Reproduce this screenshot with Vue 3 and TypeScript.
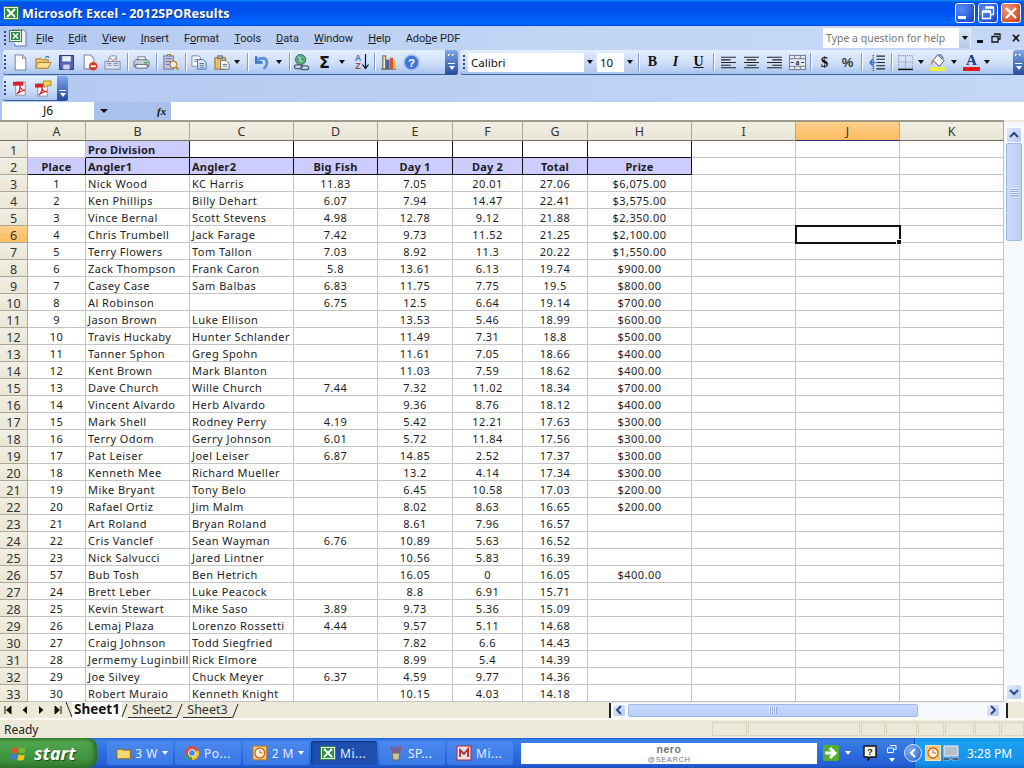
<script setup lang="ts">
const cols: string[] = ['A', 'B', 'C', 'D', 'E', 'F', 'G', 'H', 'I', 'J', 'K']
const data: string[][] = [
  ['1', 'Nick Wood', 'KC Harris', '11.83', '7.05', '20.01', '27.06', '$6,075.00'],
  ['2', 'Ken Phillips', 'Billy Dehart', '6.07', '7.94', '14.47', '22.41', '$3,575.00'],
  ['3', 'Vince Bernal', 'Scott Stevens', '4.98', '12.78', '9.12', '21.88', '$2,350.00'],
  ['4', 'Chris Trumbell', 'Jack Farage', '7.42', '9.73', '11.52', '21.25', '$2,100.00'],
  ['5', 'Terry Flowers', 'Tom Tallon', '7.03', '8.92', '11.3', '20.22', '$1,550.00'],
  ['6', 'Zack Thompson', 'Frank Caron', '5.8', '13.61', '6.13', '19.74', '$900.00'],
  ['7', 'Casey Case', 'Sam Balbas', '6.83', '11.75', '7.75', '19.5', '$800.00'],
  ['8', 'Al Robinson', '', '6.75', '12.5', '6.64', '19.14', '$700.00'],
  ['9', 'Jason Brown', 'Luke Ellison', '', '13.53', '5.46', '18.99', '$600.00'],
  ['10', 'Travis Huckaby', 'Hunter Schlander', '', '11.49', '7.31', '18.8', '$500.00'],
  ['11', 'Tanner Sphon', 'Greg Spohn', '', '11.61', '7.05', '18.66', '$400.00'],
  ['12', 'Kent Brown', 'Mark Blanton', '', '11.03', '7.59', '18.62', '$400.00'],
  ['13', 'Dave Church', 'Wille Church', '7.44', '7.32', '11.02', '18.34', '$700.00'],
  ['14', 'Vincent Alvardo', 'Herb Alvardo', '', '9.36', '8.76', '18.12', '$400.00'],
  ['15', 'Mark Shell', 'Rodney Perry', '4.19', '5.42', '12.21', '17.63', '$300.00'],
  ['16', 'Terry Odom', 'Gerry Johnson', '6.01', '5.72', '11.84', '17.56', '$300.00'],
  ['17', 'Pat Leiser', 'Joel Leiser', '6.87', '14.85', '2.52', '17.37', '$300.00'],
  ['18', 'Kenneth Mee', 'Richard Mueller', '', '13.2', '4.14', '17.34', '$300.00'],
  ['19', 'Mike Bryant', 'Tony Belo', '', '6.45', '10.58', '17.03', '$200.00'],
  ['20', 'Rafael Ortiz', 'Jim Malm', '', '8.02', '8.63', '16.65', '$200.00'],
  ['21', 'Art Roland', 'Bryan Roland', '', '8.61', '7.96', '16.57', ''],
  ['22', 'Cris Vanclef', 'Sean Wayman', '6.76', '10.89', '5.63', '16.52', ''],
  ['23', 'Nick Salvucci', 'Jared Lintner', '', '10.56', '5.83', '16.39', ''],
  ['57', 'Bub Tosh', 'Ben Hetrich', '', '16.05', '0', '16.05', '$400.00'],
  ['24', 'Brett Leber', 'Luke Peacock', '', '8.8', '6.91', '15.71', ''],
  ['25', 'Kevin Stewart', 'Mike Saso', '3.89', '9.73', '5.36', '15.09', ''],
  ['26', 'Lemaj Plaza', 'Lorenzo Rossetti', '4.44', '9.57', '5.11', '14.68', ''],
  ['27', 'Craig Johnson', 'Todd Siegfried', '', '7.82', '6.6', '14.43', ''],
  ['28', 'Jermemy Luginbill', 'Rick Elmore', '', '8.99', '5.4', '14.39', ''],
  ['29', 'Joe Silvey', 'Chuck Meyer', '6.37', '4.59', '9.77', '14.36', ''],
  ['30', 'Robert Muraio', 'Kenneth Knight', '', '10.15', '4.03', '14.18', ''],
]
const rows: string[][] = [
  ['', 'Pro Division', '', '', '', '', '', ''],
  ['Place', 'Angler1', 'Angler2', 'Big Fish', 'Day 1', 'Day 2', 'Total', 'Prize'],
  ...data,
].map((r) => [...r, '', '', ''])

function cellClass(r: number, c: number): Record<string, boolean> {
  const head = r === 1
  const top = r === 0
  return {
    ctr: c !== 1 && c !== 2,
    bold: head || (top && c === 1),
    fill: (head && c < 8) || (top && c === 1),
    ruled: (head && c < 8) || (top && c >= 1 && c < 8),
    sel: r === 5 && c === 9,
  }
}
const statusPanels: string[] = ['p1', 'p2', 'p3', 'p4', 'p5', 'p6', 'p7', 'p8']
</script>

<template>
  <div class="win">
    <header class="title">
      <svg class="t-ic" viewBox="0 0 16 16"><rect x="0.5" y="1.5" width="15" height="13" fill="#e8f3e4" stroke="#3c7f4a"/><rect x="2" y="3" width="12" height="10" fill="#2f8f46"/><path d="M4 4l8 8M12 4l-8 8" stroke="#fff" stroke-width="2"/></svg>
      <span class="t-text">Microsoft Excel - 2012SPOResults</span>
      <div class="t-btns">
        <span class="wb"><i class="wb-min"></i></span>
        <span class="wb"><svg viewBox="0 0 20 20" width="20" height="20"><path d="M7.5 4.5h8v7h-3M4.5 8.500h8v7h-8z" fill="none" stroke="#fff" stroke-width="1.300"/><path d="M7.500 4.500h8M4.500 8.500h8" stroke="#fff" stroke-width="2.400"/></svg></span>
        <span class="wb wb-x"><svg viewBox="0 0 20 20" width="20" height="20"><path d="M5 5l10 10M15 5L5 15" stroke="#fff" stroke-width="2.400"/></svg></span>
      </div>
    </header>

    <div class="menubar">
      <i class="grip"></i>
      <svg class="menu-ic" viewBox="0 0 18 18"><path d="M3 1h12l2 2v14H6v-2" fill="#eef2fb" stroke="#6b7a99"/><rect x="0.500" y="1.500" width="12" height="11" fill="#e8f3e4" stroke="#3c7f4a"/><rect x="2" y="3" width="9" height="8" fill="#2f8f46"/><path d="M4 4.500l5 5M9 4.500l-5 5" stroke="#fff" stroke-width="1.500"/></svg>
      <nav class="menus">
        <span><u>F</u>ile</span><span><u>E</u>dit</span><span><u>V</u>iew</span><span><u>I</u>nsert</span>
        <span>F<u>o</u>rmat</span><span><u>T</u>ools</span><span><u>D</u>ata</span><span><u>W</u>indow</span>
        <span><u>H</u>elp</span><span>Ado<u>b</u>e PDF</span>
      </nav>
      <div class="help-wrap">
        <div class="help-box"><span>Type a question for help</span><b class="combo-btn"><i class="tri"></i></b></div>
        <i class="mdi-min"></i>
        <svg class="mdi" viewBox="0 0 10 10" width="10" height="10"><path d="M3 1h6v5H7M1 3.500h6V9H1z" fill="none" stroke="#111" stroke-width="1.300"/></svg>
        <svg class="mdi mdi-x" viewBox="0 0 10 10" width="8" height="8"><path d="M1 1l8 8M9 1L1 9" stroke="#111" stroke-width="2"/></svg>
      </div>
    </div>

    <div class="toolrow">
      <div class="band b1">
        <i class="grip"></i>
        <button class="tb"><svg viewBox="0 0 16 16"><path d="M3 1h7l3 3v11H3z" fill="#fff" stroke="#7d8ba8"/><path d="M10 1v3h3" fill="#dfe6f3" stroke="#7d8ba8"/></svg></button>
        <button class="tb"><svg viewBox="0 0 18 16"><path d="M1 4h6l1 1h6v9H1z" fill="#e8c468" stroke="#a9842f"/><path d="M3 8h14l-3 6H1z" fill="#f7de92" stroke="#a9842f"/><path d="M11 3c1-2 3-2 4 0" fill="none" stroke="#3a6fc4" stroke-width="1.400"/></svg></button>
        <button class="tb"><svg viewBox="0 0 16 16"><rect x="1.500" y="1.500" width="13" height="13" fill="#5a64b4" stroke="#2f3680"/><rect x="4" y="2" width="8" height="5" fill="#eef1fa"/><rect x="5" y="10" width="6" height="4.500" fill="#cfd6ea"/></svg></button>
        <button class="tb"><svg viewBox="0 0 16 16"><path d="M3 1h6l3 3v10H3z" fill="#fff" stroke="#7d8ba8"/><circle cx="11.500" cy="11.500" r="4" fill="#d93c23"/><rect x="9" y="10.700" width="5" height="1.700" fill="#fff"/></svg></button>
        <button class="tb"><svg viewBox="0 0 18 16"><path d="M5 7V3l3-2h5v6" fill="#f4f6fb" stroke="#7d8ba8"/><rect x="1" y="7" width="16" height="8" fill="#dde3f1" stroke="#7d8ba8"/><path d="M3 9h5M3 11h5M10 9h5M10 11h5" stroke="#7d8ba8"/><path d="M6 3l4 3 3-3" fill="none" stroke="#c95a4a"/></svg></button>
        <i class="sep s1"></i>
        <button class="tb"><svg viewBox="0 0 18 16"><path d="M5 6V2h8v4" fill="#fff" stroke="#6c7686"/><path d="M1 7l2-2h12l2 2v5H1z" fill="#c7cdd8" stroke="#5f6a7a"/><rect x="3" y="10" width="12" height="4" fill="#eef1f5" stroke="#5f6a7a"/><rect x="12" y="7" width="3" height="2" fill="#37b34a"/></svg></button>
        <i class="sep"></i>
        <button class="tb"><svg viewBox="0 0 18 18"><rect x="2" y="2" width="10" height="14" fill="#c9c3de" stroke="#6a6a9c"/><path d="M4 5h6M4 8h6M4 11h5" stroke="#6a6a9c"/><path d="M6 2V0h3v2" fill="#d8b45a" stroke="#8a6b1f"/><circle cx="12" cy="11" r="3.500" fill="#e6f0fb" stroke="#b98a2e" stroke-width="1.400"/><path d="M14.500 13.500l3 3" stroke="#b98a2e" stroke-width="2"/></svg></button>
        <i class="sep"></i>
        <button class="tb"><svg viewBox="0 0 18 16"><path d="M1 1h7l2 2v9H1z" fill="#fff" stroke="#6f86b0"/><path d="M3 5h5M3 7h5" stroke="#6f86b0"/><path d="M7 5h6l3 3v7H7z" fill="#e4edfb" stroke="#3f63a8"/><path d="M9 9h5M9 11h5M9 13h5" stroke="#3f63a8"/></svg></button>
        <button class="tb tb-dd"><svg viewBox="0 0 18 16"><rect x="1" y="3" width="11" height="12" fill="#e6c266" stroke="#8a6b1f"/><rect x="4" y="1" width="5" height="3" fill="#b7b7b7" stroke="#666"/><path d="M7 6h6l3 3v6H7z" fill="#fff" stroke="#5f6a7a"/><path d="M9 10h5M9 12h5" stroke="#5f6a7a"/></svg></button>
        <i class="tri dd-a"></i>
        <i class="sep s2"></i>
        <button class="tb"><svg viewBox="0 0 16 16"><path d="M3 2v6h6" fill="none" stroke="#3a6fc4" stroke-width="2.200"/><path d="M4 7c2-4 8-4 9 0 .6 3-1 5-3 7" fill="none" stroke="#5f8fdb" stroke-width="2.600"/></svg></button>
        <i class="tri dd-b"></i>
        <i class="sep s3"></i>
        <button class="tb tb-link"><svg viewBox="0 0 18 18"><circle cx="8" cy="6" r="5.500" fill="#57a86b" stroke="#2f6f8e"/><path d="M5 3l3 1-1 3 3 1" stroke="#9fd3e8" fill="none" stroke-width="1.500"/><rect x="1.500" y="11.500" width="8" height="4" rx="2" fill="none" stroke="#555d6b" stroke-width="1.400"/><rect x="8.500" y="12.500" width="8" height="4" rx="2" fill="none" stroke="#555d6b" stroke-width="1.400"/></svg></button>
        <button class="tb tb-sig"><span class="sigma">Σ</span></button>
        <i class="tri dd-c"></i>
        <button class="tb tb-sort"><span class="az"><b class="az-a">A</b><b class="az-z">Z</b></span><svg class="arrow" viewBox="0 0 7 16" width="7" height="16"><path d="M3.500 0v14M.5 10.500l3 4 3-4" fill="none" stroke="#111" stroke-width="1.200"/></svg></button>
        <i class="sep s4"></i>
        <button class="tb"><svg viewBox="0 0 18 16"><path d="M1 15h16" stroke="#555" /><rect x="3" y="1" width="3" height="14" fill="#f2e7b7" stroke="#6a5a1f"/><rect x="6.500" y="5" width="3.500" height="10" fill="#3a5fb5"/><rect x="10.500" y="3" width="3.500" height="12" fill="#d9532f"/><rect x="14" y="6" width="2" height="9" fill="#e8b53a"/></svg></button>
        <button class="tb"><svg viewBox="0 0 16 16"><circle cx="8" cy="8" r="7" fill="#3f74d6" stroke="#9cbdf0" stroke-width="1.500"/><text x="8" y="12" text-anchor="middle" font-size="11" font-weight="700" font-family="Liberation Sans, sans-serif" fill="#fff">?</text></svg></button>
        <span class="chev"><i class="chev-r"></i><i class="chev-d"></i></span>
      </div>
      <div class="band b2">
        <i class="grip"></i>
        <div class="combo font"><span>Calibri</span><b class="combo-btn"><i class="tri"></i></b></div>
        <div class="combo size"><span>10</span><b class="combo-btn"><i class="tri"></i></b></div>
        <i class="sep s5"></i>
        <span class="fmt f-b">B</span>
        <span class="fmt f-i">I</span>
        <span class="fmt f-u">U</span>
        <i class="sep s6"></i>
        <button class="tb"><svg viewBox="0 0 16 16"><path d="M1 3h14M1 5.500h9M1 8h14M1 10.500h9M1 13h14" stroke="#222"/></svg></button>
        <button class="tb"><svg viewBox="0 0 16 16"><path d="M1 3h14M3.500 5.500h9M1 8h14M3.500 10.500h9M1 13h14" stroke="#222"/></svg></button>
        <button class="tb"><svg viewBox="0 0 16 16"><path d="M1 3h14M6 5.500h9M1 8h14M6 10.500h9M1 13h14" stroke="#222"/></svg></button>
        <button class="tb"><svg viewBox="0 0 18 16"><rect x="0.500" y="0.500" width="17" height="15" fill="#e6ebf4" stroke="#6c7686"/><path d="M1 4h16M1 12h16M6 1v3M12 1v3M6 12v3M12 12v3" stroke="#6c7686"/><text x="9" y="11" text-anchor="middle" font-size="8" font-weight="700" font-family="Liberation Serif, serif" fill="#222">a</text><path d="M2 8h3M13 8h3" stroke="#222"/></svg></button>
        <i class="sep s7"></i>
        <span class="fmt f-d">$</span>
        <span class="fmt f-p">%</span>
        <i class="sep s8"></i>
        <button class="tb"><svg viewBox="0 0 16 16"><path d="M7 2h8M7 5h8M7 8h8M7 11h8M7 14h8" stroke="#222"/><path d="M4 1v15" stroke="#222" stroke-dasharray="1 1"/><path d="M6 8H1m2.500-3L1 8l2.500 3" fill="none" stroke="#3a6fc4" stroke-width="1.400"/></svg></button>
        <i class="sep s9"></i>
        <button class="tb"><svg viewBox="0 0 16 16"><path d="M1.500 1.500h13v12M1.500 1.500v12M8 2v11M2 7.500h12" fill="none" stroke="#8a8f9a" stroke-dasharray="1 1"/><path d="M1 14.500h14" stroke="#111" stroke-width="1.400"/></svg></button>
        <i class="tri dd-d"></i>
        <button class="tb tb-fill"><svg viewBox="0 0 18 18"><path d="M8 1l7 6-5 6-7-6z" fill="#f4f5f8" stroke="#555"/><path d="M3 7c-1 2-2 3-1 4" fill="none" stroke="#b58a1f" stroke-width="1.500"/><path d="M9 1c2-1 4 1 5 4" fill="none" stroke="#4a6fb5" stroke-width="1.300"/><rect x="0" y="14" width="17" height="4" fill="#f2ee3c"/></svg></button>
        <i class="tri dd-e"></i>
        <button class="tb tb-fc"><span class="fc-a">A</span><i class="fc-bar"></i></button>
        <i class="tri dd-f"></i>
        <span class="chev end"><i class="chev-r"></i><i class="chev-d"></i></span>
      </div>
    </div>

    <div class="toolrow2">
      <div class="band b3">
        <i class="grip"></i>
        <button class="tb"><svg viewBox="0 0 18 18"><path d="M4 2h10v14H4z" fill="#fff" stroke="#8a8f9a"/><rect x="1" y="2" width="11" height="4" fill="#d4242a"/><path d="M5 15c3-3 4-6 3-9 1 3 3 5 6 5-3 0-6 1-9 4z" fill="none" stroke="#d4242a" stroke-width="1.300"/></svg></button>
        <button class="tb"><svg viewBox="0 0 18 18"><path d="M3 4h10v13H3z" fill="#fff" stroke="#8a8f9a"/><rect x="0" y="4" width="9" height="4" fill="#d4242a"/><path d="M4 16c3-3 4-6 3-8 1 3 3 5 6 4-3 0-6 1-9 4z" fill="none" stroke="#d4242a" stroke-width="1.300"/><path d="M9 1h8v5h-5l-2 2V6H9z" fill="#f5d94a" stroke="#a88a1c"/></svg></button>
        <span class="chev short"><i class="chev-d"></i></span>
      </div>
    </div>

    <div class="formula">
      <div class="namebox">J6</div>
      <i class="tri nb-tri"></i>
      <span class="fx">fx</span>
      <div class="fbar"></div>
    </div>

    <div class="sheet">
      <div class="grid">
        <div class="hd corner"></div>
        <div v-for="c in cols" :key="c" class="hd" :class="{ on: c === 'J' }">{{ c }}</div>
        <template v-for="(row, r) in rows" :key="r">
          <div class="rh" :class="{ on: r === 5 }">{{ r + 1 }}</div>
          <div v-for="(val, c) in row" :key="c" class="cell" :class="cellClass(r, c)">{{ val }}</div>
        </template>
      </div>
      <aside class="vscroll">
        <span class="sb-btn"><svg viewBox="0 0 10 8" width="10" height="8"><path d="M1 6l4-4 4 4" fill="none" stroke="#2c4a80" stroke-width="2"/></svg></span>
        <span class="v-thumb"><i></i></span>
        <span class="v-track"></span>
        <span class="sb-btn"><svg viewBox="0 0 10 8" width="10" height="8"><path d="M1 2l4 4 4-4" fill="none" stroke="#2c4a80" stroke-width="2"/></svg></span>
      </aside>
    </div>

    <div class="tabs">
      <div class="nav">
        <svg viewBox="0 0 8 8" width="8" height="8"><path d="M1 0v8M7 0v8L2.500 4z" stroke="#111" fill="#111"/></svg>
        <svg viewBox="0 0 8 8" width="8" height="8"><path d="M6 0v8L1.500 4z" fill="#111"/></svg>
        <svg viewBox="0 0 8 8" width="8" height="8"><path d="M2 0v8l4.500-4z" fill="#111"/></svg>
        <svg viewBox="0 0 8 8" width="8" height="8"><path d="M7 0v8M1 0v8l4.500-4z" stroke="#111" fill="#111"/></svg>
      </div>
      <svg class="sl" viewBox="0 0 8 16" width="8" height="16"><path d="M1 0l6 15" stroke="#222" fill="none"/></svg>
      <span class="tab act">Sheet1</span>
      <svg class="sl" viewBox="0 0 8 16" width="8" height="16"><path d="M1 15L6 2" stroke="#222" fill="none"/></svg>
      <span class="tab">Sheet2</span>
      <svg class="sl" viewBox="0 0 8 16" width="8" height="16"><path d="M1 15L6 2" stroke="#222" fill="none"/></svg>
      <span class="tab">Sheet3</span>
      <svg class="sl" viewBox="0 0 8 16" width="8" height="16"><path d="M1 15L6 2" stroke="#222" fill="none"/></svg>
      <div class="hscroll">
        <span class="sb-btn h"><svg viewBox="0 0 8 10" width="8" height="10"><path d="M6 1L2 5l4 4" fill="none" stroke="#2c4a80" stroke-width="2"/></svg></span>
        <span class="h-thumb"><i></i></span>
        <span class="h-track"></span>
        <span class="sb-btn h"><svg viewBox="0 0 8 10" width="8" height="10"><path d="M2 1l4 4-4 4" fill="none" stroke="#2c4a80" stroke-width="2"/></svg></span>
      </div>
    </div>

    <div class="status">
      <span class="ready">Ready</span>
      <div class="panels"><i v-for="p in statusPanels" :key="p" :class="p"></i></div>
    </div>

    <footer class="taskbar">
      <div class="start">
        <svg viewBox="0 0 18 18" width="19" height="19"><path d="M2 4c2-1 4-1 6 0l-1 5c-2-1-4-1-6 0z" fill="#e2552b"/><path d="M9 3c2 1 4 1 6 0l-1 5c-2 1-4 1-6 0z" fill="#76b82a"/><path d="M1 10c2-1 4-1 6 0l-1 5c-2-1-4-1-6 0z" fill="#3f7fd6"/><path d="M8 10c2 1 4 1 6 0l-1 5c-2 1-4 1-6 0z" fill="#f3c81d"/></svg>
        <span>start</span>
      </div>
      <div class="tasks">
        <div class="task"><svg viewBox="0 0 16 16" width="16" height="16"><path d="M1 4h5l1 1h8v9H1z" fill="#f5d770" stroke="#8a6b1f"/></svg><span class="tl">3 W</span><i class="tri w"></i></div>
        <div class="task"><svg viewBox="0 0 16 16" width="16" height="16"><circle cx="8" cy="8" r="7" fill="#dd4b39"/><path d="M8 8L1.800 11.500A7 7 0 0 0 8 15z" fill="#3da14a"/><path d="M8 8l6.600-2.500A7 7 0 0 1 8 15z" fill="#f5c518"/><circle cx="8" cy="8" r="3.500" fill="#4a89dc" stroke="#fff"/></svg><span class="tl">Po...</span></div>
        <div class="task"><svg viewBox="0 0 16 16" width="16" height="16"><rect x="1" y="1" width="14" height="14" fill="#f6c77d" stroke="#c47a1e"/><circle cx="8" cy="8" r="5" fill="#fff2d8" stroke="#c4661e" stroke-width="1.300"/><path d="M8 5v3h3" fill="none" stroke="#c4661e"/></svg><span class="tl">2 M</span><i class="tri w"></i></div>
        <div class="task act"><svg viewBox="0 0 16 16" width="16" height="16"><rect x="0.500" y="1.500" width="15" height="13" fill="#e8f3e4" stroke="#3c7f4a"/><rect x="2" y="3" width="12" height="10" fill="#2f8f46"/><path d="M4 4l8 8M12 4l-8 8" stroke="#fff" stroke-width="2"/></svg><span class="tl">Mi...</span></div>
        <div class="task"><svg viewBox="0 0 16 16" width="16" height="16"><path d="M4 8h8l-1 7H5z" fill="#c9c3a0" stroke="#6a6a4c"/><path d="M5 8L3 1M8 8V1M11 8l2-6" stroke="#c7462d" stroke-width="1.500"/><path d="M6.500 8L5.500 2M9.500 8l1-6" stroke="#3a6fc4" stroke-width="1.300"/></svg><span class="tl">SP...</span></div>
        <div class="task"><svg viewBox="0 0 16 16" width="16" height="16"><rect x="1" y="1" width="14" height="14" fill="#f3dfe0" stroke="#b02a37"/><path d="M4 12V5l4 4 4-5v8" fill="none" stroke="#b02a37" stroke-width="1.800"/></svg><span class="tl">Mi...</span></div>
      </div>
      <div class="nero"><b>nero</b><small>@SEARCH</small></div>
      <svg class="go" viewBox="0 0 16 16" width="16" height="16"><rect width="16" height="16" rx="2" fill="#54ae2f"/><path d="M2 8h9M7 3l5 5-5 5" fill="none" stroke="#fff" stroke-width="3"/></svg>
      <i class="tri w go-t"></i>
      <svg class="qm" viewBox="0 0 14 16" width="14" height="16"><path d="M1 1h12v11H7l-2 3v-3H1z" fill="#fffbe0" stroke="#111" stroke-width="1.400"/><text x="7" y="10" text-anchor="middle" font-size="9" font-weight="700" font-family="Liberation Sans, sans-serif" fill="#111">?</text></svg>
      <span class="rest">
        <svg viewBox="0 0 10 8" width="10" height="8"><path d="M3 .5h6v4H7M.5 3h6v4.500h-6z" fill="none" stroke="#fff"/></svg>
        <i class="tri w"></i>
      </span>
      <div class="tray">
        <span class="circ"><svg viewBox="0 0 8 10" width="8" height="10"><path d="M6 1L2 5l4 4" fill="none" stroke="#fff" stroke-width="2"/></svg></span>
        <svg viewBox="0 0 16 16" width="16" height="16"><rect x="0.500" y="0.500" width="15" height="15" fill="#f6c77d" stroke="#f9e3b8"/><circle cx="8" cy="8" r="5" fill="#fff2d8" stroke="#c4661e" stroke-width="1.300"/><path d="M8 5v3h3" fill="none" stroke="#c4661e"/></svg>
        <svg class="mon" viewBox="0 0 16 16" width="16" height="16"><rect x="1" y="1" width="14" height="10" fill="#b7bfca" stroke="#eef"/><path d="M0 13h7v2H0zM9 13h7v2H9z" fill="#10204a" stroke="#eef" stroke-width=".6"/></svg>
        <span class="clock">3:28 PM</span>
      </div>
    </footer>
  </div>
</template>

<style scoped>
.win { width: 1024px; height: 768px; display: flex; flex-direction: column; overflow: hidden; font-family: "Noto Sans", sans-serif; color: #111; background: #ece9d8; }
button { border: 0; background: none; padding: 0; margin: 0; }
i { display: block; font-style: normal; }

.title { height: 26px; flex: none; display: flex; align-items: center; color: #fff; background: linear-gradient(#0997ff 0, #0053ee 8%, #0050ee 40%, #0066ff 88%, #005bff 95%, #003dd7 100%); }
.t-ic { width: 16px; height: 16px; margin: 0 3px 0 3px; }
.t-text { font: 700 12.500px "Noto Sans", sans-serif; letter-spacing: 0.130px; text-shadow: 1px 1px 0 #0f2f8f; white-space: nowrap; }
.t-btns { margin-left: auto; display: flex; gap: 3px; padding-right: 3px; }
.wb { width: 20px; height: 20px; border: 1px solid #fff; border-radius: 3px; box-sizing: border-box; display: flex; align-items: flex-end; justify-content: center; overflow: hidden; background: radial-gradient(circle at 30% 30%, #5a8cf0, #2457d8 70%, #1a3fb8); }
.wb svg { margin: -1px; }
.wb-min { width: 8px; height: 3px; background: #fff; margin: 0 6px 3px 0; }
.wb-x { background: radial-gradient(circle at 30% 30%, #ef9a7a, #d9502a 70%, #b8361a); }

.menubar { height: 24px; flex: none; display: flex; align-items: center; background: linear-gradient(90deg, #b3c9f0, #c3d6f5 60%, #c4d7f6); font-family: Roboto, sans-serif; font-size: 11px; }
.grip { width: 2px; height: 14px; flex: none; margin: 0 2px 0 4px; background: repeating-linear-gradient(#30497c 0 2px, transparent 2px 4px); }
.menu-ic { width: 18px; height: 18px; margin: 0 9px 0 1px; }
.menus { display: flex; gap: 15px; white-space: nowrap; color: #1c1c1c; }
.help-wrap { margin-left: auto; display: flex; align-items: center; font-family: "Noto Sans", sans-serif; }
.help-box { width: 148px; height: 20px; background: #fff; display: flex; align-items: center; justify-content: space-between; box-sizing: border-box; font-size: 10.500px; color: #777; padding-left: 3px; border-right: 1px solid #e5edfb; }
.help-box span { white-space: nowrap; }
.combo-btn { width: 11px; height: 100%; flex: none; display: flex; align-items: center; justify-content: center; background: linear-gradient(#dce7fa, #b7c9ea); }
.tri { width: 0; height: 0; flex: none; border: 3px solid transparent; border-top: 4px solid #111; border-bottom: 0; }
.tri.w { border-top-color: #fff; }
.mdi-min { width: 6px; height: 3px; background: #111; margin: 7px 0 0 6px; }
.mdi { margin-left: 8px; flex: none; }
.mdi-x { margin: 0 4px 0 11px; }

.toolrow { height: 26px; flex: none; display: flex; align-items: stretch; gap: 2px; padding-left: 3px; background: linear-gradient(90deg, #b3c9f0, #c4d7f6); }
.band { display: flex; align-items: center; height: 25px; box-sizing: border-box; background: linear-gradient(#e4effe, #cfdff9 55%, #a9c3ee); border-bottom: 1px solid #3b619c; border-radius: 3px; font-size: 12px; }
.band .grip { margin: 0 3px 0 1px; }
.b1 { width: 455px; flex: none; }
.b2 { flex: 1; min-width: 0; }
.tb { width: 23px; height: 22px; flex: none; display: flex; align-items: center; justify-content: center; }
.tb svg { width: 17px; height: 17px; }
.sep { width: 1px; height: 18px; flex: none; margin: 0 2px 0 3px; background: #7f9ac8; box-shadow: 1px 0 0 #fff; }
.s1 { margin-left: 3px; }
.s2 { margin-left: 7px; }
.s3 { margin-left: 7px; margin-right: 0; }
.s4 { margin-left: 1px; margin-right: 2px; }
.dd-a { margin-left: 0; }
.dd-b { margin-left: 3px; }
.dd-c { margin-left: 3px; }
.tb-sort { width: 22px; margin-left: 6px; gap: 1px; }
.tb-sort svg.arrow { width: 7px; height: 16px; }
.sigma { font: 700 16px "DejaVu Sans", sans-serif; color: #111; }
.az { display: flex; flex-direction: column; font: 700 9px/8px "Liberation Sans", sans-serif; }
.az-a { color: #4a6fb5; font-weight: 700; }
.az-z { color: #a8473a; font-weight: 700; }
.chev { margin-left: auto; width: 13px; height: 25px; flex: none; display: flex; flex-direction: column; align-items: center; justify-content: center; gap: 4px; background: linear-gradient(#7ea6e8, #244a9c); border-radius: 0 3px 3px 0; }
.chev.end { width: 11px; border-radius: 3px 0 0 3px; }
.chev.short { width: 11px; justify-content: flex-end; padding-bottom: 4px; box-sizing: border-box; }
.chev-r { width: 7px; height: 5px; background: linear-gradient(135deg, #fff 0 30%, transparent 31%) 0 0 / 4px 5px no-repeat, linear-gradient(135deg, #fff 0 30%, transparent 31%) 4px 0 / 3px 5px no-repeat; }
.chev-d { width: 7px; height: 7px; border-top: 1px solid #fff; box-sizing: border-box; }
.chev-d::after { content: ""; display: block; width: 0; height: 0; margin: 2px auto 0; border: 3.500px solid transparent; border-top: 4px solid #fff; border-bottom: 0; }

.b2 .grip { margin-left: 3px; margin-right: 3px; }
.combo { height: 19px; background: #fff; display: flex; align-items: center; justify-content: space-between; flex: none; padding-left: 3px; box-sizing: border-box; font-size: 11.500px; }
.font { width: 127px; }
.size { width: 38px; margin-left: 2px; }
.fmt { width: 23px; flex: none; text-align: center; }
.f-b { font: 700 14px "Liberation Serif", serif; }
.f-i { font: italic 700 14px "Liberation Serif", serif; }
.f-u { font: 700 14px "Liberation Serif", serif; text-decoration: underline; }
.f-d { font: 700 15px "Liberation Serif", serif; }
.f-p { font: 700 13px "Liberation Sans", sans-serif; color: #333; }
.s5 { margin-left: 3px; margin-right: 2px; }
.s6 { margin: 0 3px; }
.s7 { margin: 0 2px 0 1px; }
.s8 { margin: 0 4px 0 2px; }
.s9 { margin: 0 2px; }
.b2 .tb { width: 23px; }
.dd-d { margin-left: 1px; margin-right: 3px; }
.dd-e { margin-left: 1px; margin-right: 3px; }
.dd-f { margin-left: 1px; }
.tb-fc { flex-direction: column; gap: 0; }
.fc-a { font: 700 15px/14px "Liberation Serif", serif; color: #223b82; }
.fc-bar { width: 17px; height: 4px; background: #e21a1a; }

.toolrow2 { height: 26px; flex: none; padding-left: 3px; background: linear-gradient(90deg, #b3c9f0, #c4d7f6); }
.b3 { width: 65px; height: 25px; }

.formula { height: 18px; flex: none; display: flex; align-items: center; padding-left: 2px; background: linear-gradient(90deg, #a9c1ec, #aac2ee); }
.namebox { width: 92px; height: 18px; background: #fff; text-align: center; font-size: 12px; line-height: 18px; flex: none; }
.nb-tri { margin-left: 6px; border-width: 4px; border-top-width: 4px; }
.fx { margin-left: 49px; width: 14px; font: italic 700 11px "Liberation Serif", serif; }
.fbar { flex: 1; height: 18px; background: #fff; }

.sheet { height: 582px; flex: none; display: flex; background: #fff; overflow: hidden; }
.grid { width: 1004px; flex: none; display: grid; grid-template-columns: 28px 58px 104px 104px 84px 75px 70px 65px 104px 104px 104px 104px; grid-template-rows: 21px repeat(33, 17px); font-size: 11px; letter-spacing: 0.450px; }
.hd, .rh { background: linear-gradient(#f1efe4, #e9e6d6); color: #333; box-sizing: border-box; display: flex; align-items: center; justify-content: center; font-size: 12.500px; letter-spacing: 0; border-right: 1px solid #aca899; border-bottom: 1px solid #aca899; }
.hd { border-top: 2px solid #9d9a8c; border-bottom-color: #716f64; }
.rh { font-size: 12.500px; padding-top: 2px; }
.hd.on { background: linear-gradient(#ffd08a, #fdbb62); border-bottom-color: #2a2a6a; }
.rh.on { background: linear-gradient(#ffd08a, #fdbb62); }
.cell { box-sizing: border-box; border-right: 1px solid #c4c4c4; border-bottom: 1px solid #c4c4c4; padding: 0 2px; white-space: nowrap; overflow: hidden; line-height: 18px; color: #1d1d1d; }
.ctr { text-align: center; }
.bold { font-weight: 700; letter-spacing: 0.200px; }
.fill { background: #ccccff; }
.ruled { border-color: #111; }
.sel { position: relative; overflow: visible; outline: 2px solid #111; outline-offset: -1px; z-index: 2; }
.sel::after { content: ""; position: absolute; right: -3px; bottom: -3px; width: 4px; height: 4px; background: #111; border: 1px solid #fff; }

.vscroll { flex: 1; display: flex; flex-direction: column; align-items: center; padding: 5px 2px 2px; background: #f6f9fe; border-top: 2px solid #ece9d8; box-sizing: border-box; }
.sb-btn { width: 16px; height: 16px; flex: none; display: flex; align-items: center; justify-content: center; background: linear-gradient(135deg, #e2ebfc, #b4c9f2); border: 1px solid #fff; box-sizing: border-box; border-radius: 2px; }
.v-thumb { width: 16px; height: 98px; flex: none; background: linear-gradient(90deg, #c9dafb, #bcd0f8); border: 1px solid #9fb7ea; box-sizing: border-box; border-radius: 2px; display: flex; align-items: center; justify-content: center; }
.v-thumb i { width: 8px; height: 8px; background: repeating-linear-gradient(#eef4ff 0 1px, #8fa9dc 1px 2px); }
.v-track { flex: 1; }

.tabs { height: 16px; flex: none; display: flex; align-items: center; background: #ece9d8; font-size: 13.500px; }
.nav { width: 66px; flex: none; display: flex; gap: 8.500px; padding-left: 4px; box-sizing: border-box; }
.sl { flex: none; margin: 0 -1px; }
.tab { padding: 0 5px 0 4px; line-height: 15px; color: #333; border-bottom: 1px solid #333; height: 16px; box-sizing: border-box; font-size: 12.500px; }
.tab.act { font-weight: 700; color: #111; background: #fff; border-bottom: 0; font-size: 13.500px; padding: 0 2px; }
.hscroll { margin-left: auto; margin-right: 16px; width: 399px; height: 15px; flex: none; display: flex; align-items: center; padding: 0 6px 0 1px; box-sizing: border-box; border-left: 2px solid #222; border-right: 2px solid #222; background: #f6f9fe; }
.sb-btn.h { width: 14px; height: 13px; }
.h-thumb { width: 290px; height: 13px; margin-left: 2px; flex: none; background: linear-gradient(#c9dafb, #b8cdf8); border: 1px solid #9fb7ea; box-sizing: border-box; border-radius: 2px; display: flex; align-items: center; justify-content: center; }
.h-thumb i { width: 8px; height: 7px; background: repeating-linear-gradient(90deg, #eef4ff 0 1px, #8fa9dc 1px 2px); }
.h-track { flex: 1; }

.status { height: 20px; flex: none; display: flex; align-items: center; justify-content: space-between; font-size: 12px; padding-left: 4px; box-sizing: border-box; border-top: 2px solid #fbfaf5; background: #ece9d8; color: #222; }
.panels { display: flex; height: 14px; gap: 1px; }
.panels i { border: 1px solid #d8d4c2; box-sizing: border-box; }
.p1 { width: 35px; } .p2 { width: 112px; } .p3 { width: 24px; } .p4 { width: 31px; } .p5 { width: 26px; } .p6 { width: 29px; } .p7 { width: 25px; } .p8 { width: 23px; }

.taskbar { height: 30px; flex: none; display: flex; align-items: center; background: linear-gradient(#1f63d6 0, #3a7fe8 8%, #2f6fe0 45%, #245ed4 90%, #1c4fb8 100%); color: #fff; }
.start { width: 97px; height: 30px; flex: none; display: flex; align-items: center; gap: 5px; padding-left: 10px; box-sizing: border-box; background: linear-gradient(#3f8f3f, #4fa64f 15%, #3d923d 70%, #2f7a2f); border-radius: 0 9px 9px 0; font: italic 700 18px "Noto Sans", sans-serif; text-shadow: 1px 1px 1px #1a4a1a; box-shadow: inset -3px 0 4px #2a6a2a; }
.tasks { display: flex; gap: 2px; margin-left: 10px; flex: none; }
.task { width: 66px; height: 24px; flex: none; display: flex; align-items: center; gap: 4px; padding-left: 9px; box-sizing: border-box; background: linear-gradient(#4a88ee, #3a78e6); border-radius: 3px; font-size: 12px; color: #e8f0ff; }
.task .tri { margin-left: auto; margin-right: 5px; }
.task.act { background: #1e4fae; box-shadow: inset 1px 1px 2px #12327a; }
.tl { white-space: nowrap; letter-spacing: 0.500px; }
.nero { width: 296px; height: 21px; margin-left: 8px; flex: none; background: #fff; display: flex; flex-direction: column; align-items: center; justify-content: center; color: #777; }
.nero b { font: 700 10.500px/12px "Liberation Sans", sans-serif; letter-spacing: 0.500px; }
.nero small { font: 7.500px/9px "Liberation Sans", sans-serif; letter-spacing: 0.600px; }
.go { margin-left: 6px; flex: none; }
.go-t { margin-left: 6px; border-top-color: #10204a; }
.qm { margin-left: 12px; flex: none; }
.rest { width: 10px; margin-left: 10px; flex: none; display: flex; flex-direction: column; align-items: center; gap: 5px; }
.tray { flex: 1; height: 30px; margin-left: 17px; display: flex; align-items: center; gap: 2px; background: linear-gradient(#1290e8, #1ba0f2 15%, #1590ea 85%, #0d76d0); border-left: 1px solid #0e4ea8; padding-left: 9px; box-sizing: border-box; }
.circ { width: 18px; height: 18px; margin-left: -20px; margin-right: 1px; border-radius: 50%; background: radial-gradient(circle at 35% 35%, #7fb0f5, #2458c8); border: 1px solid #dce8ff; box-sizing: border-box; display: flex; align-items: center; justify-content: center; flex: none; }
.clock { margin-left: 6px; font-size: 12px; white-space: nowrap; }
</style>

<style>
html, body { margin: 0; padding: 0; background: #ece9d8; }
</style>
